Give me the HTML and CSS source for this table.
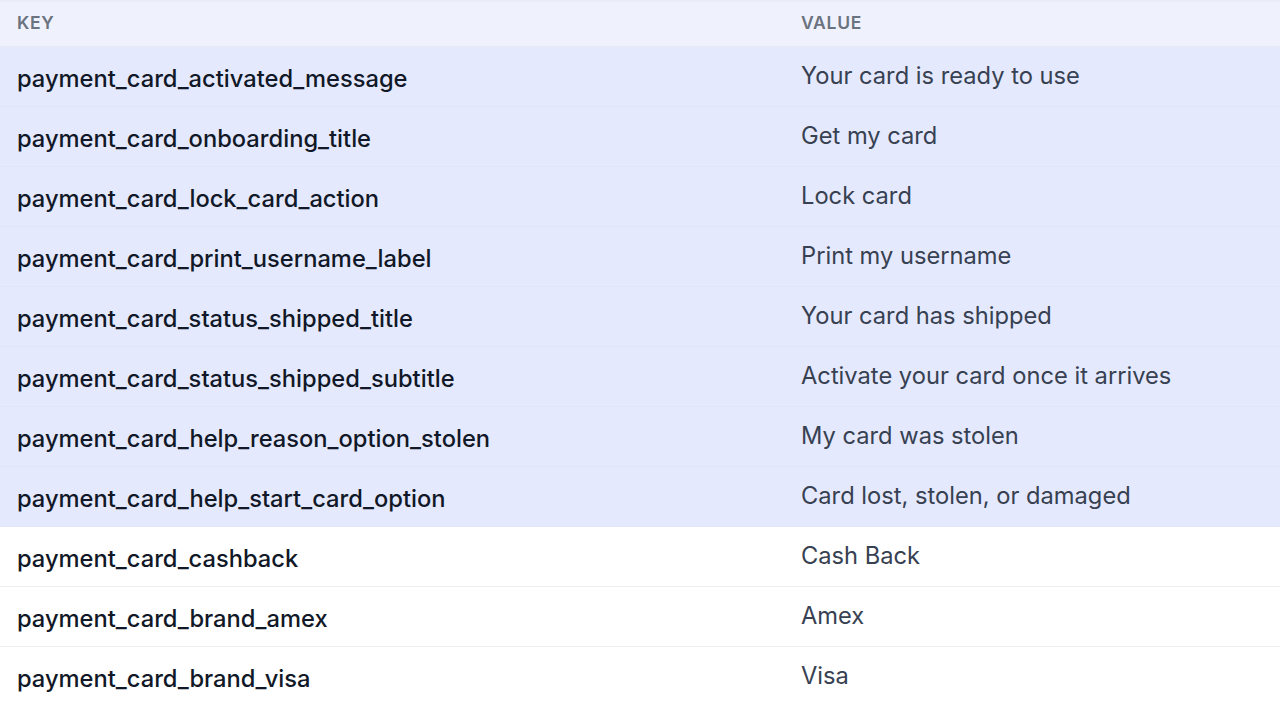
FILE: index.html
```html
<!DOCTYPE html>
<html>
<head>
<meta charset="utf-8">
<link rel="stylesheet" href="styles.css">
</head>
<body>
<div class="table">
  <div class="row head">
    <div class="key">Key</div>
    <div class="val">Value</div>
  </div>
  <div class="row sel"><div class="key">payment_card_activated_message</div><div class="val">Your card is ready to use</div></div>
  <div class="row sel"><div class="key">payment_card_onboarding_title</div><div class="val">Get my card</div></div>
  <div class="row sel"><div class="key">payment_card_lock_card_action</div><div class="val">Lock card</div></div>
  <div class="row sel"><div class="key">payment_card_print_username_label</div><div class="val">Print my username</div></div>
  <div class="row sel"><div class="key">payment_card_status_shipped_title</div><div class="val">Your card has shipped</div></div>
  <div class="row sel"><div class="key">payment_card_status_shipped_subtitle</div><div class="val">Activate your card once it arrives</div></div>
  <div class="row sel"><div class="key">payment_card_help_reason_option_stolen</div><div class="val">My card was stolen</div></div>
  <div class="row sel"><div class="key">payment_card_help_start_card_option</div><div class="val">Card lost, stolen, or damaged</div></div>
  <div class="row"><div class="key">payment_card_cashback</div><div class="val">Cash Back</div></div>
  <div class="row"><div class="key">payment_card_brand_amex</div><div class="val">Amex</div></div>
  <div class="row"><div class="key">payment_card_brand_visa</div><div class="val">Visa</div></div>
</div>
</body>
</html>
```
FILE: styles.css
```css
html, body {
  margin: 0;
  padding: 0;
  background: #ffffff;
  font-family: Inter, "Noto Sans", sans-serif;
  overflow: hidden;
}
.table {
  display: flex;
  flex-direction: column;
}
.row {
  display: grid;
  grid-template-columns: 785px 1fr;
  height: 60px;
  box-sizing: border-box;
  border-bottom: 1px solid #eceef2;
  background: #ffffff;
}
.row.sel {
  background: #e5e9fe;
  border-bottom: 1px solid #dfe4f7;
}
.row.head {
  height: 47px;
  background: #eff2fc;
  border-top: 2px solid #e9edfa;
  border-bottom: 1px solid #e6eaf6;
  align-items: center;
}
.head .key, .head .val {
  font-size: 17.5px;
  font-weight: 600;
  color: #6b7280;
  text-transform: uppercase;
  letter-spacing: 0.04em;
  padding-top: 0;
  padding-bottom: 4px;
}
.key {
  padding-left: 17px;
  font-size: 23.7px;
  font-weight: 500;
  color: #111827;
  align-self: center;
  padding-top: 4px;
}
.val {
  padding-left: 16px;
  font-size: 23.7px;
  font-weight: 400;
  color: #374151;
  align-self: center;
  padding-bottom: 2px;
}
```
